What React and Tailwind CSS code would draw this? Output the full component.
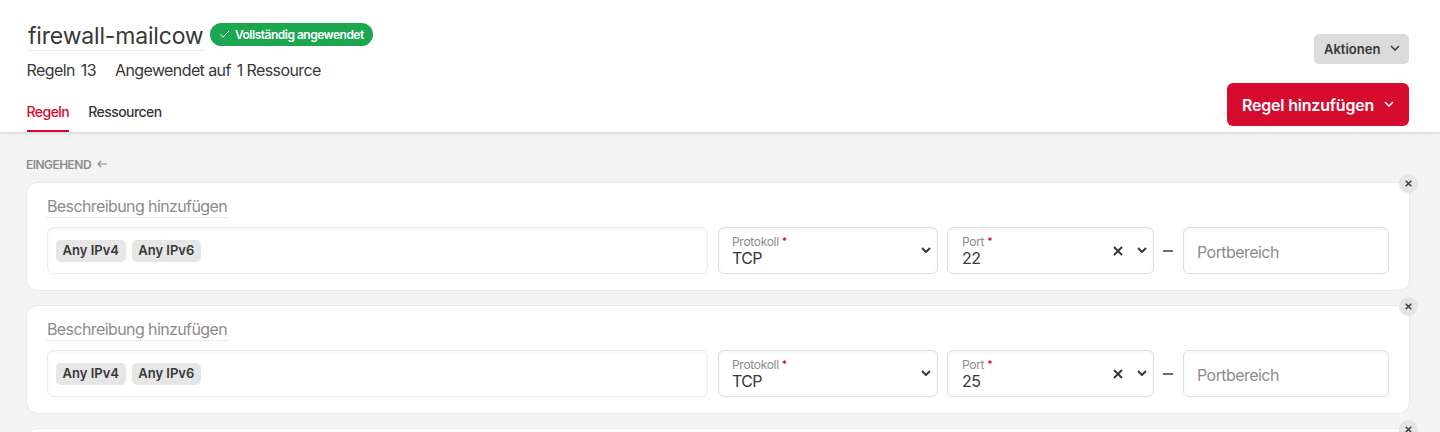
import { useState } from 'react';

const RULES = [
  { id: 1, protocol: 'TCP', port: '22' },
  { id: 2, protocol: 'TCP', port: '25' },
];

const SOURCES = ['Any IPv4', 'Any IPv6'];

const TABS = ['Regeln', 'Ressourcen'];

const fieldClass =
  'h-[47px] rounded-md border border-[#dedede] bg-white shadow-[inset_0_2px_3px_rgba(0,0,0,0.04)]';

function Chevron({ className, strokeWidth = 1.5 }) {
  return (
    <svg
      viewBox="0 0 10 6"
      className={className}
      fill="none"
      stroke="currentColor"
      strokeWidth={strokeWidth}
      aria-hidden="true"
    >
      <path d="M1 1l4 4 4-4" />
    </svg>
  );
}

function Cross({ className }) {
  return (
    <svg viewBox="0 0 10 10" className={className} fill="none" stroke="currentColor" strokeWidth="2" aria-hidden="true">
      <path d="M1 1l8 8M9 1l-8 8" />
    </svg>
  );
}

function FieldLabel({ children }) {
  return (
    <span className="flex text-[12px] leading-[14px] tracking-[-0.3px] text-[#8c8c8c]">
      {children}
      <span className="ml-[3px] text-[10px] leading-[13px] font-semibold text-[#d50c2d]">*</span>
    </span>
  );
}

function Card({ children }) {
  return (
    <div className="relative h-[109px] rounded-xl border border-[#e9e9e9] bg-white pt-[14px] pr-5 pl-5">
      <button
        type="button"
        aria-label="Regel entfernen"
        className="absolute -top-[9px] -right-[9px] flex h-[19px] w-[19px] items-center justify-center rounded-full bg-[#e5e5e5] text-[#383838]"
      >
        <Cross className="h-[7px] w-[7px]" />
      </button>
      {children}
    </div>
  );
}

function RuleCard({ rule }) {
  return (
    <Card>
      <div className="flex h-[21px]">
        <span className="border-b border-dotted border-[#d9d9d9] text-[16px] leading-[18px] tracking-[-0.6px] text-[#8c8c8c]">
          Beschreibung hinzufügen
        </span>
      </div>
      <div className="mt-[9px] flex items-center">
        <div className="flex h-[47px] w-[661px] items-center gap-[6px] rounded-md border border-[#ebebeb] bg-white px-2 shadow-[inset_0_2px_3px_rgba(0,0,0,0.04)]">
          {SOURCES.map((source) => (
            <span
              key={source}
              className="flex h-[22px] w-[69.5px] items-center justify-center rounded-[5px] bg-[#e6e6e6] text-[13px] font-semibold text-[#383838]"
            >
              {source}
            </span>
          ))}
        </div>
        <div className={`${fieldClass} ml-[10px] flex w-[220px] items-center justify-between pr-[6px] pl-[13px]`}>
          <div>
            <FieldLabel>Protokoll</FieldLabel>
            <span className="block text-[16px] leading-[18px] tracking-[-0.65px] text-[#383838]">{rule.protocol}</span>
          </div>
          <Chevron className="mb-[2px] h-[6px] w-[10px] text-[#383838]" strokeWidth={2} />
        </div>
        <div className={`${fieldClass} ml-[9px] flex w-[207px] items-center pr-[6px] pl-[14px]`}>
          <div className="flex-1">
            <FieldLabel>Port</FieldLabel>
            <span className="block text-[16px] leading-[18px] tracking-[-0.55px] text-[#383838]">{rule.port}</span>
          </div>
          <Cross className="mr-[14px] h-[10px] w-[10px] text-[#383838]" />
          <Chevron className="mb-[2px] h-[6px] w-[10px] text-[#383838]" strokeWidth={2} />
        </div>
        <span className="mr-[10px] ml-[9px] h-[2px] w-[10px] bg-[#6b6b6b]" />
        <div className={`${fieldClass} flex w-[206px] items-center px-[13px]`}>
          <span className="pt-[3px] text-[16px] leading-[20px] tracking-[-0.55px] text-[#8c8c8c]">Portbereich</span>
        </div>
      </div>
    </Card>
  );
}

export default function App() {
  const [activeTab, setActiveTab] = useState('Regeln');

  return (
    <div className="h-[432px] overflow-hidden bg-[#f4f4f4] font-['Inter',sans-serif] text-[#383838]">
      <header className="flex h-[132px] justify-between bg-white pr-[31px] pl-[26.5px] shadow-[0_1px_3px_rgba(0,0,0,0.15)]">
        <div className="flex flex-col">
          <div className="mt-[20px] flex h-[31px] items-start">
            <h1 className="ml-[1.5px] h-[31px] w-[176px] border-b border-dotted border-[#d9d9d9] text-[23px] leading-[32px] tracking-[-0.18px]">
              firewall-mailcow
            </h1>
            <span className="mt-[3px] ml-[6px] flex h-[23px] w-[163px] items-center rounded-full bg-[#1ba64f] pt-px pl-[9px] text-[12px] font-semibold tracking-[-0.5px] text-white">
              <svg viewBox="0 0 11 8" className="mr-[5px] mb-[2px] h-[8px] w-[11px]" fill="none" stroke="currentColor" aria-hidden="true">
                <path d="M1 4.2l3 3L10 1" />
              </svg>
              Vollständig angewendet
            </span>
          </div>
          <div className="mt-[9px] flex text-[16px] leading-[20px] tracking-[-0.6px]">
            <span className="mr-[6px]">Regeln</span>
            <span className="mr-[19px]">13</span>
            <span className="mr-[6px]">Angewendet auf</span>
            <span>1 Ressource</span>
          </div>
          <nav className="mt-auto flex gap-[19px]">
            {TABS.map((tab) => (
              <button
                key={tab}
                type="button"
                onClick={() => setActiveTab(tab)}
                className={`h-[30px] border-b-2 pb-[8px] text-[14px] leading-[20px] font-medium tracking-[-0.55px] ${
                  tab === activeTab ? 'border-[#d50c2d] text-[#d50c2d]' : 'border-transparent text-[#383838]'
                }`}
              >
                {tab}
              </button>
            ))}
          </nav>
        </div>
        <div className="flex flex-col items-end pt-[34px]">
          <button
            type="button"
            className="flex h-[30px] w-[95px] items-center justify-between rounded-[5px] bg-[#dbdbdb] pr-[9px] pl-[10px] text-[13px] font-semibold"
          >
            <span className="pt-px">Aktionen</span>
            <Chevron className="mb-[2px] h-[6px] w-[10px]" />
          </button>
          <button
            type="button"
            className="mt-[19px] flex h-[43px] w-[182px] items-center justify-between rounded-md bg-[#d50c2d] px-[15px] text-[16px] font-semibold tracking-[-0.2px] text-white"
          >
            Regel hinzufügen
            <Chevron className="mb-[2px] h-[6px] w-[10px]" />
          </button>
        </div>
      </header>
      <main className="pr-[30px] pl-[26px]">
        <div className="flex h-[50px] items-center pt-[16px] text-[12px] font-semibold tracking-[-0.55px] text-[#8c8c8c]">
          EINGEHEND
          <svg viewBox="0 0 10 8" className="mb-[2px] ml-[6px] h-[8px] w-[10px]" fill="none" stroke="currentColor" strokeWidth="1.2" aria-hidden="true">
            <path d="M10 4H1M4 1L1 4l3 3" />
          </svg>
        </div>
        <div className="flex flex-col gap-[14px]">
          {RULES.map((rule) => (
            <RuleCard key={rule.id} rule={rule} />
          ))}
          <Card />
        </div>
      </main>
    </div>
  );
}
